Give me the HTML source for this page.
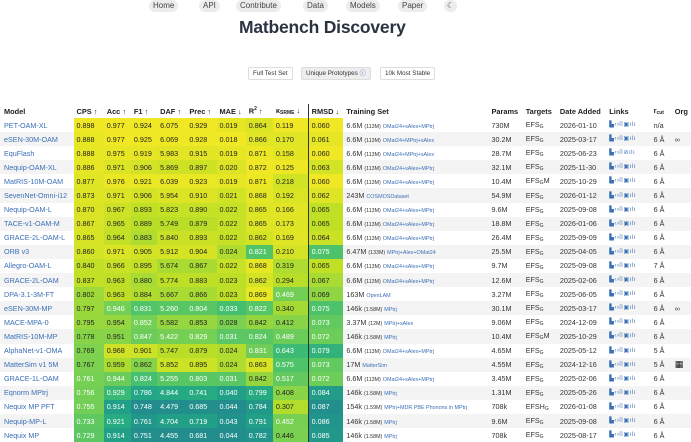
<!DOCTYPE html>
<html><head><meta charset="utf-8">
<style>
*{margin:0;padding:0;box-sizing:border-box}
body{width:691px;height:440px;overflow:hidden;background:#fff;font-family:"Liberation Sans","DejaVu Sans",sans-serif;color:#333;position:relative}
.nav{position:absolute;top:0;left:0;width:691px;height:13px}
.nav span{position:absolute;top:0;height:12px;line-height:12px;font-size:8px;color:#444;background:#ececec;border-radius:6px;padding:0 4px}
h1{position:absolute;top:17px;left:239px;width:162px;text-align:center;font-size:17.5px;font-weight:bold;color:#2b3240;white-space:nowrap;letter-spacing:-0.2px}
.btn{position:absolute;top:67px;height:13px;line-height:12px;font-size:6.3px;color:#333;border:1px solid #ddd;border-radius:2px;background:#fff;padding:0 4px}
table{position:absolute;top:104px;left:0;border-collapse:collapse;table-layout:fixed;width:691px;font-size:7.2px}
td,th{height:14.1px;padding:0 0 0 3px;white-space:nowrap;overflow:hidden;text-align:left}
th{font-weight:bold;color:#222;font-size:7.4px;height:14px}
tr:nth-child(even) td{background:#f4f4f4}
td.m{color:#3b6fb6;padding-left:4px}
th.m{padding-left:4px}
.bl{border-left:1.5px solid #333}
.sm{font-size:5.3px}
.lk{color:#3b6fb6;font-size:5.4px}
.ic{color:#3b6fb6;font-size:6px;letter-spacing:0.5px}
sub{font-size:5px;vertical-align:-1px}
</style></head><body>
<div class="nav">
<span style="left:149px">Home</span>
<span style="left:199px">API</span>
<span style="left:236px">Contribute</span>
<span style="left:303px">Data</span>
<span style="left:346px">Models</span>
<span style="left:398px">Paper</span>
<span style="left:444px;padding:0 3px">&#9790;</span>
</div>
<h1>Matbench Discovery</h1>
<div class="btn" style="left:248px">Full Test Set</div>
<div class="btn" style="left:301px;background:#eee">Unique Prototypes <span style="color:#3b6fb6">ⓘ</span></div>
<div class="btn" style="left:380px">10k Most Stable</div>
<table>
<colgroup><col style="width:73px"><col style="width:30px"><col style="width:27px"><col style="width:26px"><col style="width:29px"><col style="width:30px"><col style="width:29px"><col style="width:27px"><col style="width:35px"><col style="width:35px"><col style="width:144px"><col style="width:34px"><col style="width:34px"><col style="width:49px"><col style="width:44px"><col style="width:21px"><col style="width:19px"></colgroup>
<tr><th class="m">Model</th><th>CPS ↑</th><th>Acc ↑</th><th>F1 ↑</th><th>DAF ↑</th><th>Prec ↑</th><th>MAE ↓</th><th>R<sup style="font-size:5px">2</sup> ↑</th><th>κ<sub>SRME</sub> ↓</th><th class="bl">RMSD ↓</th><th>Training Set</th><th>Params</th><th>Targets</th><th>Date Added</th><th>Links</th><th>r<sub>cut</sub></th><th>Org</th></tr>
<tbody id="b">
<tr><td class="m">PET-OAM-XL</td><td>0.898</td><td>0.977</td><td>0.924</td><td>6.075</td><td>0.929</td><td>0.019</td><td>0.864</td><td>0.119</td><td class="bl">0.060</td><td>6.6M <span class="sm">(113M)</span> <span class="lk">OMat24+sAlex+MPtrj</span></td><td>730M</td><td>EFS<sub>G</sub></td><td>2026-01-10</td><td class="ic">▙‹›⌷▣ılı</td><td>n/a</td><td></td></tr>
<tr><td class="m">eSEN-30M-OAM</td><td>0.888</td><td>0.977</td><td>0.925</td><td>6.069</td><td>0.928</td><td>0.018</td><td>0.866</td><td>0.170</td><td class="bl">0.061</td><td>6.6M <span class="sm">(113M)</span> <span class="lk">OMat24+MPtrj+sAlex</span></td><td>30.2M</td><td>EFS<sub>G</sub></td><td>2025-03-17</td><td class="ic">▙‹›⌷▣ılı</td><td>6 Å</td><td>∞</td></tr>
<tr><td class="m">EquFlash</td><td>0.888</td><td>0.975</td><td>0.919</td><td>5.983</td><td>0.915</td><td>0.019</td><td>0.871</td><td>0.158</td><td class="bl">0.060</td><td>6.6M <span class="sm">(113M)</span> <span class="lk">OMat24+MPtrj+sAlex</span></td><td>28.7M</td><td>EFS<sub>G</sub></td><td>2025-06-23</td><td class="ic">▙‹›⌷⊘ılı</td><td>6 Å</td><td></td></tr>
<tr><td class="m">Nequip-OAM-XL</td><td>0.886</td><td>0.971</td><td>0.906</td><td>5.869</td><td>0.897</td><td>0.020</td><td>0.872</td><td>0.125</td><td class="bl">0.063</td><td>6.6M <span class="sm">(113M)</span> <span class="lk">OMat24+sAlex+MPtrj</span></td><td>32.1M</td><td>EFS<sub>G</sub></td><td>2025-11-30</td><td class="ic">▙‹›⌷▣ılı</td><td>6 Å</td><td></td></tr>
<tr><td class="m">MatRIS-10M-OAM</td><td>0.877</td><td>0.976</td><td>0.921</td><td>6.039</td><td>0.923</td><td>0.019</td><td>0.871</td><td>0.218</td><td class="bl">0.060</td><td>6.6M <span class="sm">(113M)</span> <span class="lk">OMat24+sAlex+MPtrj</span></td><td>10.4M</td><td>EFS<sub>G</sub>M</td><td>2025-10-29</td><td class="ic">▙‹›⌷▣ılı</td><td>6 Å</td><td></td></tr>
<tr><td class="m">SevenNet-Omni-i12</td><td>0.873</td><td>0.971</td><td>0.906</td><td>5.954</td><td>0.910</td><td>0.021</td><td>0.868</td><td>0.192</td><td class="bl">0.062</td><td>243M <span class="lk">COSMOSDataset</span></td><td>54.9M</td><td>EFS<sub>G</sub></td><td>2026-01-12</td><td class="ic">▙‹›⌷▣ılı</td><td>6 Å</td><td></td></tr>
<tr><td class="m">Nequip-OAM-L</td><td>0.870</td><td>0.967</td><td>0.893</td><td>5.823</td><td>0.890</td><td>0.022</td><td>0.865</td><td>0.166</td><td class="bl">0.065</td><td>6.6M <span class="sm">(113M)</span> <span class="lk">OMat24+sAlex+MPtrj</span></td><td>9.6M</td><td>EFS<sub>G</sub></td><td>2025-09-08</td><td class="ic">▙‹›⌷▣ılı</td><td>6 Å</td><td></td></tr>
<tr><td class="m">TACE-v1-OAM-M</td><td>0.867</td><td>0.965</td><td>0.889</td><td>5.749</td><td>0.879</td><td>0.022</td><td>0.865</td><td>0.173</td><td class="bl">0.065</td><td>6.6M <span class="sm">(113M)</span> <span class="lk">OMat24+sAlex+MPtrj</span></td><td>18.8M</td><td>EFS<sub>G</sub></td><td>2026-01-06</td><td class="ic">▙‹›⌷▣ılı</td><td>6 Å</td><td></td></tr>
<tr><td class="m">GRACE-2L-OAM-L</td><td>0.865</td><td>0.964</td><td>0.883</td><td>5.840</td><td>0.893</td><td>0.022</td><td>0.862</td><td>0.169</td><td class="bl">0.064</td><td>6.6M <span class="sm">(113M)</span> <span class="lk">OMat24+sAlex+MPtrj</span></td><td>26.4M</td><td>EFS<sub>G</sub></td><td>2025-09-09</td><td class="ic">▙‹›⌷▣ılı</td><td>6 Å</td><td></td></tr>
<tr><td class="m">ORB v3</td><td>0.860</td><td>0.971</td><td>0.905</td><td>5.912</td><td>0.904</td><td>0.024</td><td>0.821</td><td>0.210</td><td class="bl">0.075</td><td>6.47M <span class="sm">(133M)</span> <span class="lk">MPtrj+Alex+OMat24</span></td><td>25.5M</td><td>EFS<sub>G</sub></td><td>2025-04-05</td><td class="ic">▙‹›⌷▣ılı</td><td>6 Å</td><td></td></tr>
<tr><td class="m">Allegro-OAM-L</td><td>0.840</td><td>0.966</td><td>0.895</td><td>5.674</td><td>0.867</td><td>0.022</td><td>0.868</td><td>0.319</td><td class="bl">0.065</td><td>6.6M <span class="sm">(113M)</span> <span class="lk">OMat24+sAlex+MPtrj</span></td><td>9.7M</td><td>EFS<sub>G</sub></td><td>2025-09-08</td><td class="ic">▙‹›⌷▣ılı</td><td>7 Å</td><td></td></tr>
<tr><td class="m">GRACE-2L-OAM</td><td>0.837</td><td>0.963</td><td>0.880</td><td>5.774</td><td>0.883</td><td>0.023</td><td>0.862</td><td>0.294</td><td class="bl">0.067</td><td>6.6M <span class="sm">(113M)</span> <span class="lk">OMat24+sAlex+MPtrj</span></td><td>12.6M</td><td>EFS<sub>G</sub></td><td>2025-02-06</td><td class="ic">▙‹›⌷▣ılı</td><td>6 Å</td><td></td></tr>
<tr><td class="m">DPA-3.1-3M-FT</td><td>0.802</td><td>0.963</td><td>0.884</td><td>5.667</td><td>0.866</td><td>0.023</td><td>0.869</td><td>0.469</td><td class="bl">0.069</td><td>163M <span class="lk">OpenLAM</span></td><td>3.27M</td><td>EFS<sub>G</sub></td><td>2025-06-05</td><td class="ic">▙‹›⌷▣ılı</td><td>6 Å</td><td></td></tr>
<tr><td class="m">eSEN-30M-MP</td><td>0.797</td><td>0.946</td><td>0.831</td><td>5.260</td><td>0.804</td><td>0.033</td><td>0.822</td><td>0.340</td><td class="bl">0.075</td><td>146k <span class="sm">(1.58M)</span> <span class="lk">MPtrj</span></td><td>30.1M</td><td>EFS<sub>G</sub></td><td>2025-03-17</td><td class="ic">▙‹›⌷▣ılı</td><td>6 Å</td><td>∞</td></tr>
<tr><td class="m">MACE-MPA-0</td><td>0.795</td><td>0.954</td><td>0.852</td><td>5.582</td><td>0.853</td><td>0.028</td><td>0.842</td><td>0.412</td><td class="bl">0.073</td><td>3.37M <span class="sm">(12M)</span> <span class="lk">MPtrj+sAlex</span></td><td>9.06M</td><td>EFS<sub>G</sub></td><td>2024-12-09</td><td class="ic">▙‹›⌷▣ılı</td><td>6 Å</td><td></td></tr>
<tr><td class="m">MatRIS-10M-MP</td><td>0.778</td><td>0.951</td><td>0.847</td><td>5.422</td><td>0.829</td><td>0.031</td><td>0.824</td><td>0.489</td><td class="bl">0.072</td><td>146k <span class="sm">(1.58M)</span> <span class="lk">MPtrj</span></td><td>10.4M</td><td>EFS<sub>G</sub>M</td><td>2025-10-29</td><td class="ic">▙‹›⌷▣ılı</td><td>6 Å</td><td></td></tr>
<tr><td class="m">AlphaNet-v1-OMA</td><td>0.769</td><td>0.968</td><td>0.901</td><td>5.747</td><td>0.879</td><td>0.024</td><td>0.831</td><td>0.643</td><td class="bl">0.079</td><td>6.6M <span class="sm">(113M)</span> <span class="lk">OMat24+sAlex+MPtrj</span></td><td>4.65M</td><td>EFS<sub>G</sub></td><td>2025-05-12</td><td class="ic">▙‹›⌷▣ılı</td><td>5 Å</td><td></td></tr>
<tr><td class="m">MatterSim v1 5M</td><td>0.767</td><td>0.959</td><td>0.862</td><td>5.852</td><td>0.895</td><td>0.024</td><td>0.863</td><td>0.575</td><td class="bl">0.073</td><td>17M <span class="lk">MatterSim</span></td><td>4.55M</td><td>EFS<sub>G</sub></td><td>2024-12-16</td><td class="ic">▙‹›⌷▣ılı</td><td>5 Å</td><td><span style="font-size:9px;color:#111">▦</span></td></tr>
<tr><td class="m">GRACE-1L-OAM</td><td>0.761</td><td>0.944</td><td>0.824</td><td>5.255</td><td>0.803</td><td>0.031</td><td>0.842</td><td>0.517</td><td class="bl">0.072</td><td>6.6M <span class="sm">(113M)</span> <span class="lk">OMat24+sAlex+MPtrj</span></td><td>3.45M</td><td>EFS<sub>G</sub></td><td>2025-02-06</td><td class="ic">▙‹›⌷▣ılı</td><td>6 Å</td><td></td></tr>
<tr><td class="m">Eqnorm MPtrj</td><td>0.756</td><td>0.929</td><td>0.786</td><td>4.844</td><td>0.741</td><td>0.040</td><td>0.799</td><td>0.408</td><td class="bl">0.084</td><td>146k <span class="sm">(1.58M)</span> <span class="lk">MPtrj</span></td><td>1.31M</td><td>EFS<sub>G</sub></td><td>2025-05-26</td><td class="ic">▙‹›⌷▣ılı</td><td>6 Å</td><td></td></tr>
<tr><td class="m">Nequix MP PFT</td><td>0.755</td><td>0.914</td><td>0.748</td><td>4.479</td><td>0.685</td><td>0.044</td><td>0.784</td><td>0.307</td><td class="bl">0.087</td><td>154k <span class="sm">(1.59M)</span> <span class="lk">MPtrj+MDR PBE Phonons in MPtrj</span></td><td>708k</td><td>EFSH<sub>G</sub></td><td>2026-01-08</td><td class="ic">▙‹›⌷▣ılı</td><td>6 Å</td><td></td></tr>
<tr><td class="m">Nequip-MP-L</td><td>0.733</td><td>0.921</td><td>0.761</td><td>4.704</td><td>0.719</td><td>0.043</td><td>0.791</td><td>0.452</td><td class="bl">0.086</td><td>146k <span class="sm">(1.58M)</span> <span class="lk">MPtrj</span></td><td>9.6M</td><td>EFS<sub>G</sub></td><td>2025-09-08</td><td class="ic">▙‹›⌷▣ılı</td><td>6 Å</td><td></td></tr>
<tr><td class="m">Nequix MP</td><td>0.729</td><td>0.914</td><td>0.751</td><td>4.455</td><td>0.681</td><td>0.044</td><td>0.782</td><td>0.446</td><td class="bl">0.085</td><td>146k <span class="sm">(1.58M)</span> <span class="lk">MPtrj</span></td><td>708k</td><td>EFS<sub>G</sub></td><td>2025-08-17</td><td class="ic">▙‹›⌷▣ılı</td><td>6 Å</td><td></td></tr>
</tbody></table>
<script>
var R=[[0.5,0.898,0],[0.89,0.977,0],[0.72,0.925,0],[4.2,6.075,0],[0.64,0.929,0],[0.018,0.048,1],[0.76,0.872,0],[0.119,1.1,1],[0.060,0.092,1]];
var S=[[0.4,[42,120,142]],[0.5,[33,145,140]],[0.6,[34,168,132]],[0.7,[68,191,112]],[0.8,[122,209,81]],[0.9,[189,223,38]],[1.0,[240,232,36]]];
function col(v){for(var i=1;i<S.length;i++){if(v<=S[i][0]){var a=S[i-1],b=S[i],f=(v-a[0])/(b[0]-a[0]);return [0,1,2].map(function(k){return Math.round(a[1][k]+(b[1][k]-a[1][k])*f)});}}return S[S.length-1][1];}
var rows=document.getElementById('b').rows;
for(var r=0;r<rows.length;r++){for(var c=0;c<9;c++){var td=rows[r].cells[c+1],x=parseFloat(td.textContent),g=R[c],t=(x-g[0])/(g[1]-g[0]);if(g[2])t=1-t;t=Math.max(0,Math.min(1,t));var v=0.4+0.6*t,cc=col(v);td.style.background='rgb('+cc+')';td.style.color=v<0.8?'#fff':'#222';}}
</script>
</body></html>
